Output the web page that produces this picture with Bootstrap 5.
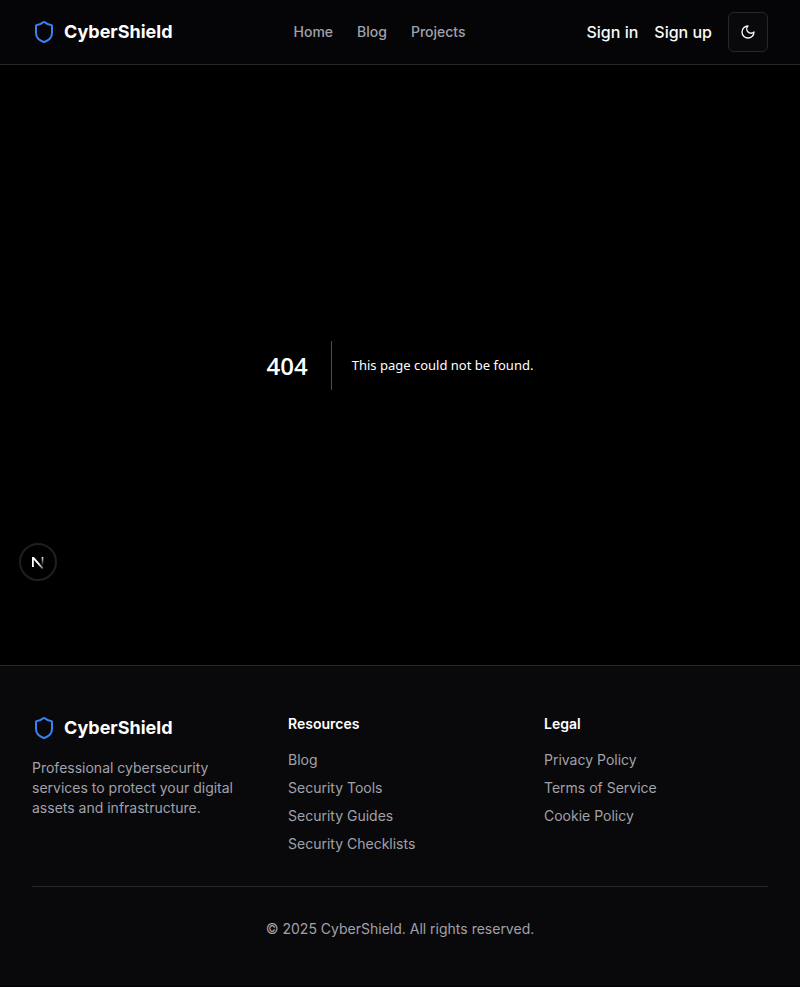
<!DOCTYPE html>
<html lang="en" data-bs-theme="dark">
<head>
<meta charset="utf-8">
<meta name="viewport" content="width=device-width, initial-scale=1">
<title>404: This page could not be found.</title>
<link href="https://cdn.jsdelivr.net/npm/bootstrap@5.3.0/dist/css/bootstrap.min.css" rel="stylesheet">
<style>
  body { background: #000; color: #fafafa; font-family: Inter, sans-serif; }
  a { text-decoration: none; }
  .site-header { background: #050507; border-bottom: 1px solid #27272a; }
  .header-row { height: 64px; padding: 0 32px; }
  .brand-link { color: #fff; font-size: 18px; line-height: 28px; font-weight: 700; }
  .brand-link:hover { color: #fff; }
  .brand-link svg { color: #3b82f6; }
  .main-link { color: #a1a1aa; font-size: 14px; line-height: 20px; font-weight: 500; }
  .auth-btn { color: #fafafa; font-size: 16px; line-height: 24px; font-weight: 500; }
  .theme-btn { width: 40px; height: 40px; border: 1px solid #27272a; border-radius: 6px; background: #09090b; color: #fafafa; }
  .error-area { min-height: 600px; font-family: "Open Sans", "Noto Sans", sans-serif; color: #fff; }
  .error-code { font-size: 24px; line-height: 49px; font-weight: 600; padding-right: 23px; margin-right: 20px; border-right: 1px solid #4d4d4d; }
  .error-text { font-family: "Noto Sans", sans-serif; font-size: 13px; line-height: 49px; font-weight: 400; }
  .dev-badge { left: 19px; bottom: 84px; width: 38px; height: 38px; border: 2px solid #1f1f1f; background: #000; color: #fff; }
  .site-footer { background: #09090b; border-top: 1px solid #27272a; padding: 48px 32px 47px; font-size: 14px; line-height: 20px; color: #a1a1aa; }
  .site-footer h2 { color: #fff; font-size: 14px; line-height: 20px; font-weight: 600; }
  .site-footer li a { color: #a1a1aa; }
  .copyright { border-top: 1px solid #27272a; margin-top: 32px; padding-top: 32px; }
  .foot-row { --bs-gutter-x: 32px; }
</style>
<script src="https://cdn.jsdelivr.net/npm/bootstrap@5.3.0/dist/js/bootstrap.bundle.min.js" defer></script>
</head>
<body>
<header class="site-header">
  <div class="header-row d-flex align-items-center justify-content-between">
    <a href="#" class="brand-link d-flex align-items-center gap-2">
      <svg width="24" height="24" viewBox="0 0 24 24" fill="none" stroke="currentColor" stroke-width="2" stroke-linecap="round" stroke-linejoin="round" aria-hidden="true"><path d="M20 13c0 5-3.500 7.500-7.660 8.950a1 1 0 0 1-.67-.01C7.500 20.500 4 18 4 13V6a1 1 0 0 1 1-1c2 0 4.500-1.200 6.240-2.720a1.170 1.170 0 0 1 1.520 0C14.510 3.810 17 5 19 5a1 1 0 0 1 1 1z"/></svg>
      <span>CyberShield</span>
    </a>
    <nav class="d-flex gap-4" aria-label="Main">
      <a href="#" class="main-link">Home</a>
      <a href="#" class="main-link">Blog</a>
      <a href="#" class="main-link">Projects</a>
    </nav>
    <div class="d-flex align-items-center gap-3">
      <button type="button" class="auth-btn btn border-0 p-0">Sign in</button>
      <button type="button" class="auth-btn btn border-0 p-0">Sign up</button>
      <button type="button" class="theme-btn d-flex align-items-center justify-content-center p-0" aria-label="Toggle theme">
        <svg width="16" height="16" viewBox="0 0 24 24" fill="none" stroke="currentColor" stroke-width="2" stroke-linecap="round" stroke-linejoin="round" aria-hidden="true"><path d="M12 3a6 6 0 0 0 9 9 9 9 0 1 1-9-9Z"/></svg>
      </button>
    </div>
  </div>
</header>

<main class="error-area position-relative d-flex align-items-center justify-content-center">
  <h1 class="error-code mb-0">404</h1>
  <h2 class="error-text mb-0">This page could not be found.</h2>
  <button type="button" class="dev-badge position-absolute rounded-circle d-flex align-items-center justify-content-center p-0" aria-label="Open developer tools">
    <svg width="14" height="14" viewBox="0 0 14 14" fill="none" aria-hidden="true">
      <defs><linearGradient id="stem" x1="0" y1="1" x2="0" y2="11" gradientUnits="userSpaceOnUse"><stop stop-color="#fff"/><stop offset="1" stop-color="#fff" stop-opacity="0"/></linearGradient>
      <linearGradient id="diag" x1="8" y1="8" x2="13" y2="14" gradientUnits="userSpaceOnUse"><stop stop-color="#fff"/><stop offset="1" stop-color="#fff" stop-opacity=".3"/></linearGradient></defs>
      <path d="M1 2H2.900L12.500 13L11 14L2.800 4.800V12H1Z" fill="url(#diag)"/>
      <path d="M11.500 2V11" stroke="url(#stem)" stroke-width="1.600"/>
    </svg>
  </button>
</main>

<footer class="site-footer">
  <div class="row foot-row">
    <div class="col-4">
      <a href="#" class="brand-link d-flex align-items-center gap-2 mb-3">
        <svg width="24" height="24" viewBox="0 0 24 24" fill="none" stroke="currentColor" stroke-width="2" stroke-linecap="round" stroke-linejoin="round" aria-hidden="true"><path d="M20 13c0 5-3.500 7.500-7.660 8.950a1 1 0 0 1-.67-.01C7.500 20.500 4 18 4 13V6a1 1 0 0 1 1-1c2 0 4.500-1.200 6.240-2.720a1.170 1.170 0 0 1 1.520 0C14.510 3.810 17 5 19 5a1 1 0 0 1 1 1z"/></svg>
        <span>CyberShield</span>
      </a>
      <p class="mb-0">Professional cybersecurity services to protect your digital assets and infrastructure.</p>
    </div>
    <div class="col-4">
      <h2 class="mb-3">Resources</h2>
      <ul class="list-unstyled d-flex flex-column gap-2 mb-0">
        <li><a href="#">Blog</a></li>
        <li><a href="#">Security Tools</a></li>
        <li><a href="#">Security Guides</a></li>
        <li><a href="#">Security Checklists</a></li>
      </ul>
    </div>
    <div class="col-4">
      <h2 class="mb-3">Legal</h2>
      <ul class="list-unstyled d-flex flex-column gap-2 mb-0">
        <li><a href="#">Privacy Policy</a></li>
        <li><a href="#">Terms of Service</a></li>
        <li><a href="#">Cookie Policy</a></li>
      </ul>
    </div>
  </div>
  <div class="copyright text-center">© 2025 CyberShield. All rights reserved.</div>
</footer>
</body>
</html>
